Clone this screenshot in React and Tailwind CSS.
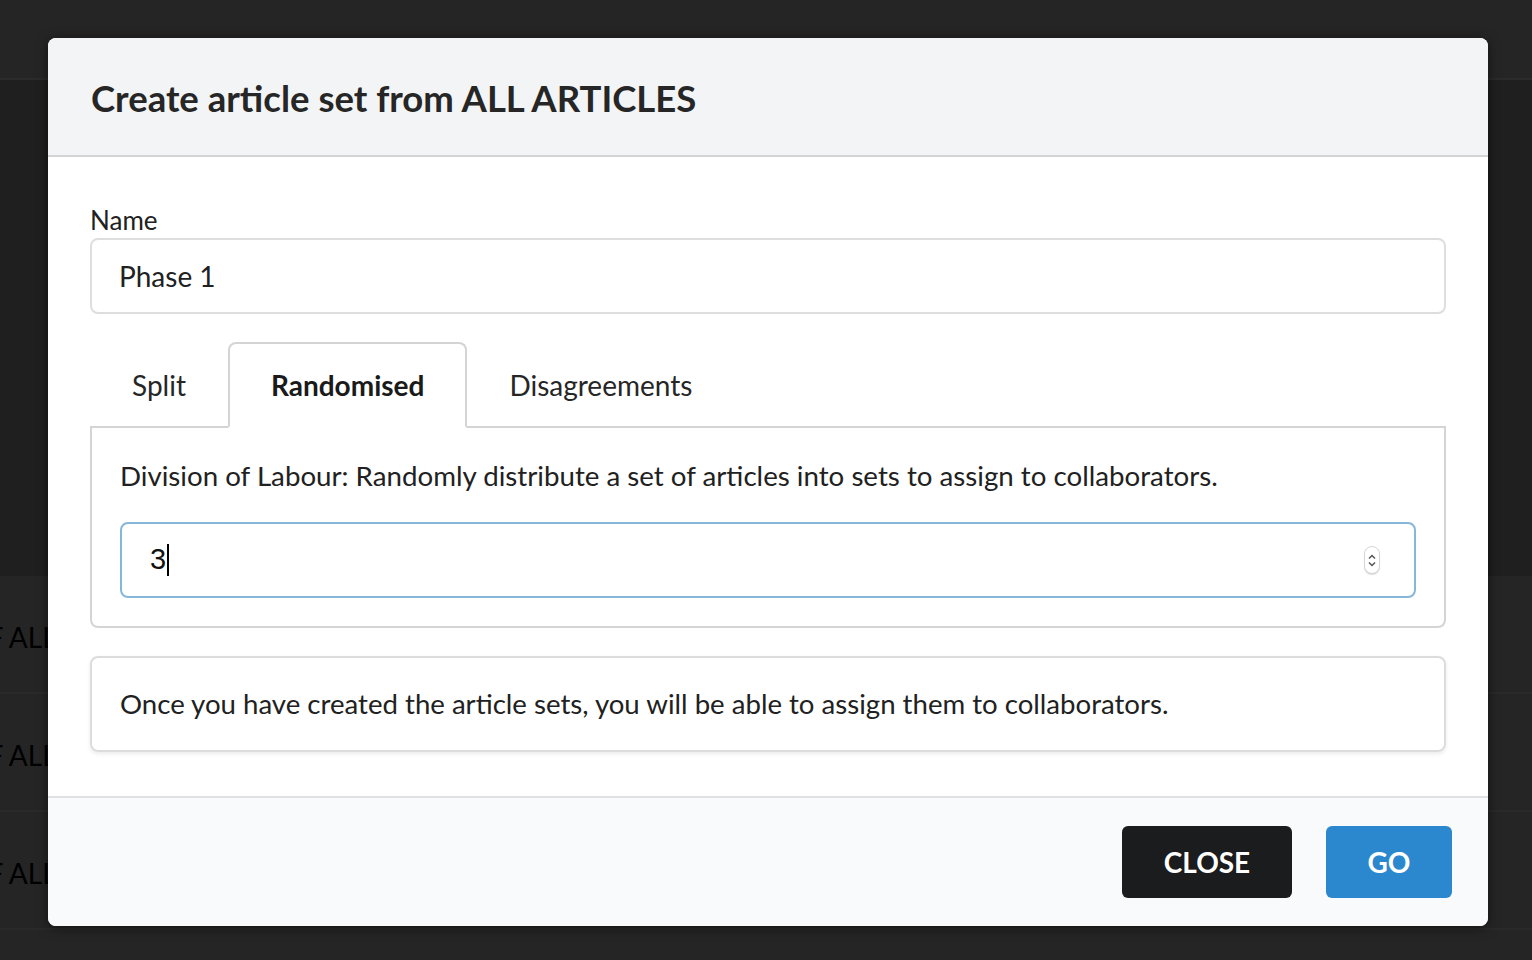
import { useState } from 'react'

const tabs = ['Split', 'Randomised', 'Disagreements']

function Spinner() {
  return (
    <div className="flex h-[28px] w-[16px] flex-col items-center justify-center rounded-full border border-[#d6d6d6] bg-white shadow-[0_1px_1px_rgba(0,0,0,0.15)]">
      <svg width="10" height="8" viewBox="0 0 10 8" className="-mb-[1px]">
        <path d="M2 5.5 L5 2.5 L8 5.5" fill="none" stroke="#555" strokeWidth="1.5" />
      </svg>
      <svg width="10" height="8" viewBox="0 0 10 8">
        <path d="M2 2.5 L5 5.5 L8 2.5" fill="none" stroke="#555" strokeWidth="1.5" />
      </svg>
    </div>
  )
}

export default function App() {
  const [active, setActive] = useState('Randomised')

  return (
    <div className="relative h-[960px] w-[1532px] overflow-hidden bg-[#1f1f1f] font-['Lato','Noto_Sans',sans-serif]">
      {/* page behind the dimmer */}
      <div className="h-[80px] border-b-2 border-[#2b2b2b] bg-[#252525]" />
      <div className="h-[496px] bg-[#1f1f1f]" />
      {[0, 1, 2].map(i => (
        <div key={i} className="flex h-[118px] items-center overflow-hidden border-b-2 border-[#2a2a2a] bg-[#252525] pt-[6px]">
          <span className="-ml-[35px] whitespace-nowrap text-[28px] text-black">OF ALL ARTICLES</span>
        </div>
      ))}
      <div className="h-[30px] bg-[#252525]" />

      {/* modal */}
      <div className="absolute left-[48px] top-[38px] w-[1440px] overflow-hidden rounded-[8px] bg-white shadow-[0_2px_12px_rgba(0,0,0,0.5)]">
        <div className="flex h-[119px] items-center border-b-2 border-[#d4d4d5] bg-[#f3f4f5] px-[43px] pt-[3px]">
          <h1 className="text-[36.5px] font-bold text-[#262626]">Create article set from ALL ARTICLES</h1>
        </div>

        <div className="px-[42px] pb-[44px] pt-[49px] text-[#212121]">
          <label className="mb-[4px] block h-[28px] text-[26px] leading-[28px]">Name</label>
          <div className="flex h-[76px] items-center rounded-[8px] border-2 border-[#dedede] px-[27px] text-[28px]">
            Phase 1
          </div>

          <div className="mt-[28px] flex border-b-2 border-[#d4d4d5]">
            {tabs.map(t => (
              <button
                key={t}
                onClick={() => setActive(t)}
                className={
                  t === active
                    ? '-mb-[2px] flex h-[86px] items-center rounded-t-[8px] border-2 border-[#d4d4d5] border-b-white bg-white px-[41px] text-[28px] font-bold text-[#1a1a1a]'
                    : '-mb-[2px] flex h-[86px] items-center rounded-t-[8px] border-2 border-transparent px-[40px] text-[28px] text-[#262626]'
                }
              >
                {t}
              </button>
            ))}
          </div>
          <div className="rounded-b-[8px] border-2 border-t-0 border-[#d4d4d5] px-[28px] pb-[28px] pt-[28px]">
            <p className="text-[27.7px] leading-[40px]">
              Division of Labour: Randomly distribute a set of articles into sets to assign to collaborators.
            </p>
            <div className="mt-[26px] flex h-[76px] items-center rounded-[8px] border-2 border-[#85b7d9] pl-[28px] pr-[34px]">
              <span className="font-['Liberation_Sans',Arial,sans-serif] text-[29px] text-[#111]">3</span>
              <span className="ml-[1px] h-[32px] w-[2px] bg-black" />
              <div className="flex-1" />
              <Spinner />
            </div>
          </div>

          <div className="mt-[28px] flex h-[96px] items-center rounded-[8px] border-2 border-[#dcdcdd] px-[28px] text-[27.6px] shadow-[0_2px_4px_rgba(0,0,0,0.08)]">
            Once you have created the article sets, you will be able to assign them to collaborators.
          </div>
        </div>

        <div className="flex h-[130px] items-center justify-end gap-[34px] border-t-2 border-[#e0e1e2] bg-[#f9fafb] pr-[36px]">
          <button className="h-[72px] w-[170px] rounded-[6px] bg-[#1b1c1d] text-[28px] font-bold text-white">CLOSE</button>
          <button className="h-[72px] w-[126px] rounded-[6px] bg-[#2b88ce] text-[28px] font-bold text-white">GO</button>
        </div>
      </div>
    </div>
  )
}
